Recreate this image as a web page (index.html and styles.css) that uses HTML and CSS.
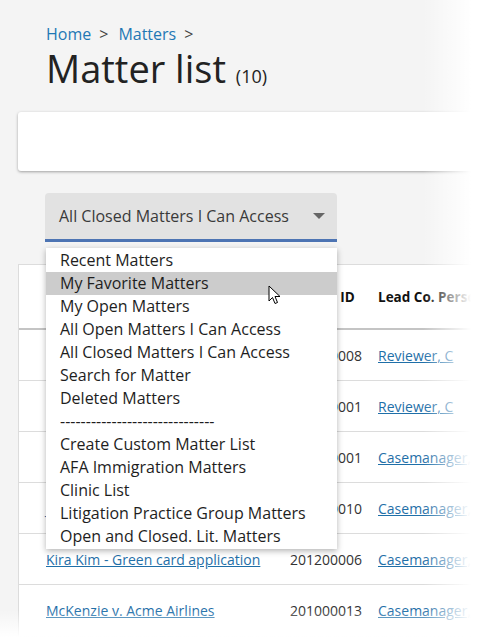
FILE: index.html
```html
<!DOCTYPE html>
<html>
<head>
<meta charset="utf-8">
<link rel="stylesheet" href="styles.css">
</head>
<body>
<div class="page">
  <header class="head">
    <nav class="crumbs"><a class="crumb">Home</a><span class="sep">&gt;</span><a class="crumb">Matters</a><span class="sep">&gt;</span></nav>
    <h1 class="title">Matter list <span class="count">(10)</span></h1>
  </header>
  <div class="card filter-card"></div>
  <div class="select-wrap">
    <div class="select">
      <span class="select-text">All Closed Matters I Can Access</span>
      <span class="caret"></span>
    </div>
    <ul class="menu">
      <li>Recent Matters</li>
      <li class="hover">My Favorite Matters</li>
      <li>My Open Matters</li>
      <li>All Open Matters I Can Access</li>
      <li>All Closed Matters I Can Access</li>
      <li>Search for Matter</li>
      <li>Deleted Matters</li>
      <li>------------------------------</li>
      <li>Create Custom Matter List</li>
      <li>AFA Immigration Matters</li>
      <li>Clinic List</li>
      <li>Litigation Practice Group Matters</li>
      <li>Open and Closed. Lit. Matters</li>
    </ul>
    <svg class="cursor" width="14" height="20" viewBox="0 0 14 20"><path d="M1 1 L1 16 L4.5 12.5 L7 18.5 L9.5 17.5 L7 11.5 L12 11.5 Z" fill="#fff" stroke="#000" stroke-width="1" stroke-linejoin="round"/></svg>
  </div>
  <div class="card table-card">
    <div class="row header-row"><div class="c-name">Matter Name</div><div class="c-id">Matter ID</div><div class="c-lead">Lead Co. Person</div></div>
    <div class="row"><div class="c-name"><a>Brown v. City Transit</a></div><div class="c-id">201300008</div><div class="c-lead"><a>Reviewer, C</a></div></div>
    <div class="row"><div class="c-name"><a>Davis Estate Planning</a></div><div class="c-id">201300001</div><div class="c-lead"><a>Reviewer, C</a></div></div>
    <div class="row"><div class="c-name"><a>Garcia - Asylum petition</a></div><div class="c-id">201200001</div><div class="c-lead"><a>Casemanager, J</a></div></div>
    <div class="row"><div class="c-name"><a>Jones v. Metro Housing</a></div><div class="c-id">201100010</div><div class="c-lead"><a>Casemanager, J</a></div></div>
    <div class="row"><div class="c-name"><a>Kira Kim - Green card application</a></div><div class="c-id">201200006</div><div class="c-lead"><a>Casemanager, J</a></div></div>
    <div class="row"><div class="c-name"><a>McKenzie v. Acme Airlines</a></div><div class="c-id">201000013</div><div class="c-lead"><a>Casemanager, J</a></div></div>
  </div>
</div>
<div class="fade-right"></div>
<div class="fade-bottom"></div>
</body>
</html>
```
FILE: styles.css
```css
html, body {
  margin: 0;
  height: 100%;
  overflow: hidden;
}
body {
  background: #f4f4f4;
  font-family: "Open Sans", "Noto Sans", sans-serif;
  color: #222;
  position: relative;
}
.page {
  padding: 22px 0 0 18px;
}
.head {
  padding-left: 28px;
}
.crumbs {
  font-size: 16px;
  line-height: 24px;
  display: flex;
  gap: 8px;
}
.crumb {
  color: #1f78b4;
}
.sep {
  color: #444;
  margin-right: 2px;
}
.title {
  margin: 0;
  font-weight: 400;
  font-size: 38px;
  line-height: 44px;
  color: #222;
}
.count {
  font-size: 18px;
}
.card {
  background: #fff;
  width: calc(100% + 30px);
  box-sizing: border-box;
}
.filter-card {
  margin-top: 14px;
  height: 59px;
  border-radius: 3px;
  box-shadow: 0 1px 3px rgba(0,0,0,0.35);
}
.select-wrap {
  position: relative;
  margin: 22px 0 0 27px;
  width: 292px;
  z-index: 2;
}
.select {
  height: 46px;
  background: #e2e2e2;
  border-bottom: 3px solid #4d74b3;
  border-radius: 4px 4px 0 0;
  display: flex;
  align-items: center;
  padding: 0 12px 0 14px;
}
.select-text {
  flex: 1;
  font-size: 16px;
  color: #3a3a3a;
}
.caret {
  width: 0;
  height: 0;
  border-left: 6px solid transparent;
  border-right: 6px solid transparent;
  border-top: 6px solid #666;
}
.menu {
  position: absolute;
  left: 1px;
  top: 55px;
  width: 291px;
  margin: 0;
  padding: 1px 0;
  list-style: none;
  background: #fff;
  box-shadow: 0 2px 6px rgba(0,0,0,0.3);
  box-sizing: border-box;
}
.menu li {
  height: 23px;
  line-height: 23px;
  font-size: 16px;
  padding-left: 14px;
  color: #1e1e1e;
  white-space: nowrap;
}
.menu li.hover {
  background: #cccccc;
}
.cursor {
  position: absolute;
  left: 223px;
  top: 92px;
}
.table-card {
  margin-top: 22px;
  border: 1px solid #dcdcdc;
  border-right: none;
  border-bottom: none;
}
.row {
  display: grid;
  grid-template-columns: 271px 88px 1fr;
  height: 51px;
  align-items: center;
  border-bottom: 1px solid #dcdcdc;
  font-size: 14px;
  color: #333;
  box-sizing: border-box;
}
.row:last-child {
  border-bottom: none;
}
.header-row {
  height: 65px;
  border-bottom: 2px solid #c4c4c4;
  font-weight: 700;
  font-size: 13.5px;
  color: #111;
}
.c-name {
  padding-left: 27px;
  white-space: nowrap;
}
.c-id {
  white-space: nowrap;
}
.c-lead {
  white-space: nowrap;
}
.row a {
  color: #1f6fa8;
  text-decoration: underline;
}
.fade-right {
  position: absolute;
  top: 0;
  right: 0;
  width: 60px;
  height: 100%;
  background: linear-gradient(to right, rgba(255,255,255,0), #fff 80%);
  pointer-events: none;
  z-index: 5;
}
.fade-bottom {
  position: absolute;
  left: 0;
  bottom: 0;
  width: 100%;
  height: 30px;
  background: linear-gradient(to bottom, rgba(255,255,255,0), #fff 90%);
  pointer-events: none;
  z-index: 5;
}
```
